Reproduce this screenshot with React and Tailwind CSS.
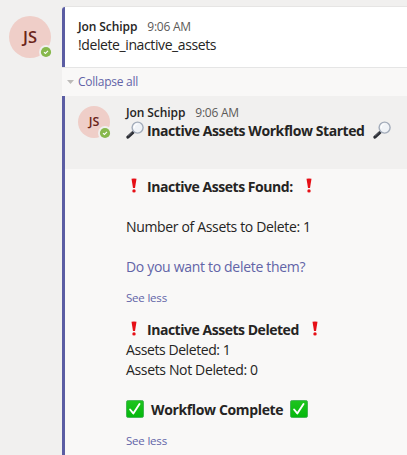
import React from "react";

function Magnifier({ className = "" }) {
  return (
    <svg viewBox="0 0 18 18" className={`mb-[2px] h-[18px] w-[18px] shrink-0 ${className}`}>
      <path d="M8.4 10.2 6.6 12" stroke="#8d98a8" strokeWidth="1.4" />
      <path d="M6.8 11.7 1.9 16.1" stroke="#2b2d33" strokeWidth="3.1" strokeLinecap="round" />
      <path d="M6.2 11.3 2 15.1" stroke="#70747e" strokeWidth="0.7" />
      <circle cx="11.6" cy="6.6" r="5.5" fill="#f0f3f7" stroke="#a3acba" strokeWidth="1.4" />
      <path d="M8.2 7.2A3.8 3.8 0 0 1 11.5 3" fill="none" stroke="#fff" strokeWidth="1.2" />
    </svg>
  );
}

function Exclaim({ className = "" }) {
  return (
    <svg viewBox="0 0 6 15" className={`mb-[3px] h-[15px] w-[6px] shrink-0 ${className}`}>
      <path d="M.5.7Q3 .1 5.5.7L4 10H2Z" fill="#e60f16" />
      <circle cx="3" cy="12.9" r="1.7" fill="#e60f16" />
    </svg>
  );
}

function CheckBox({ className = "" }) {
  return (
    <svg viewBox="0 0 18 18" className={`mb-[2px] h-[18px] w-[18px] shrink-0 ${className}`}>
      <defs>
        <linearGradient id="green" x1="0" y1="0" x2="0" y2="1">
          <stop offset="0" stopColor="#1fc41f" />
          <stop offset="1" stopColor="#04b80c" />
        </linearGradient>
      </defs>
      <rect x=".4" y=".4" width="17.2" height="17.2" rx="2" fill="url(#green)" stroke="#35a84a" strokeWidth=".8" />
      <path d="M4.1 9.5 7.3 13.4 13.5 4" fill="none" stroke="#fff" strokeWidth="1.9" strokeLinecap="round" strokeLinejoin="round" />
    </svg>
  );
}

function Avatar({ large = false }) {
  return (
    <div className={`relative flex shrink-0 items-center justify-center rounded-full bg-[#efcec8] font-semibold text-[#6b2419] ${large ? "h-[42px] w-[42px] text-[16.5px]" : "h-8 w-8 text-[12.5px]"}`}>
      JS
      <svg viewBox="0 0 14 14" className={`absolute h-[14px] w-[14px] ${large ? "-right-[2px] -bottom-[1px]" : "-right-[2px] -bottom-[2px]"}`}>
        <circle cx="7" cy="7" r="7" fill="#f1f0ef" />
        <circle cx="7" cy="7" r="5.1" fill="#87b84c" />
        <path d="M5 7.1 6.4 8.4 9 5.8" fill="none" stroke="#fff" strokeWidth="1.1" />
      </svg>
    </div>
  );
}

function Author() {
  return (
    <div className="flex h-4 items-center gap-[10px] text-[12px] leading-4">
      <span className="font-semibold tracking-[-0.08px]">Jon Schipp</span>
      <span className="tracking-[-0.25px] text-[#5c5a58]">9:06 AM</span>
    </div>
  );
}

export default function App() {
  return (
    <main className="flex h-[455px] w-[407px] overflow-hidden bg-[#f1f0ef] font-['Open_Sans','Noto_Sans',sans-serif] text-[14px] leading-5 whitespace-nowrap text-[#252423]">
      <aside className="w-[62px] shrink-0 pt-4 pl-[9px]">
        <Avatar large />
      </aside>
      <section className="mt-[6px] flex flex-1 flex-col rounded-tl-[3px] border-t border-[#e6e5e4] bg-[#f9f8f7]">
        <article className="h-[60px] shrink-0 rounded-tl-[3px] border-l-[3px] border-[#5b5da3] bg-white pt-3 pl-[13px]">
          <Author />
          <p className="tracking-[-0.4px]">!delete_inactive_assets</p>
        </article>
        <div className="flex h-[29px] shrink-0 items-center border-t border-[#e5e5e5] pl-[5px] text-[12px] text-[#6264a7]">
          <svg viewBox="0 0 7 4" className="mr-1 h-1 w-[7px]"><path d="M0 0H7L3.5 4Z" fill="#bdbbb9" /></svg>
          <span className="tracking-[-0.27px]">Collapse all</span>
        </div>
        <div className="flex-1 border-l-[3px] border-[#5b5da3]">
          <article className="flex h-[73px] bg-[#f1f0ef] pt-[9px] pl-[13px]">
            <div className="mr-4 pt-[1px]"><Avatar /></div>
            <div>
              <Author />
              <h1 className="flex h-5 items-center font-bold">
                <Magnifier className="mr-[3px]" />
                <span className="tracking-[-0.43px]">Inactive Assets Workflow Started</span>
                <Magnifier className="ml-[8px]" />
              </h1>
            </div>
          </article>
          <article className="pt-2 pl-[61px]">
            <h2 className="flex h-5 items-center font-bold">
              <Exclaim className="mr-[10px] ml-[5px]" />
              <span className="tracking-[-0.46px]">Inactive Assets Found:</span>
              <Exclaim className="ml-[13px]" />
            </h2>
            <p className="mt-5 tracking-[-0.34px]">Number of Assets to Delete: 1</p>
            <p className="mt-5 tracking-[-0.31px] text-[#6264a7]">Do you want to delete them?</p>
            <p className="mt-[13px] text-[11.5px] leading-4 tracking-[-0.2px] text-[#6264a7]">See less</p>
          </article>
          <article className="pt-[14px] pl-[61px]">
            <h2 className="flex h-5 items-center font-bold">
              <Exclaim className="mr-[10px] ml-[5px]" />
              <span className="tracking-[-0.47px]">Inactive Assets Deleted</span>
              <Exclaim className="ml-[13px]" />
            </h2>
            <p className="tracking-[-0.42px]">Assets Deleted: 1</p>
            <p className="tracking-[-0.35px]">Assets Not Deleted: 0</p>
            <h2 className="mt-5 flex h-5 items-center font-bold">
              <CheckBox className="mr-[7px]" />
              <span className="tracking-[-0.36px]">Workflow Complete</span>
              <CheckBox className="ml-[7px]" />
            </h2>
            <p className="mt-[13px] text-[11.5px] leading-4 tracking-[-0.2px] text-[#6264a7]">See less</p>
          </article>
        </div>
      </section>
    </main>
  );
}
